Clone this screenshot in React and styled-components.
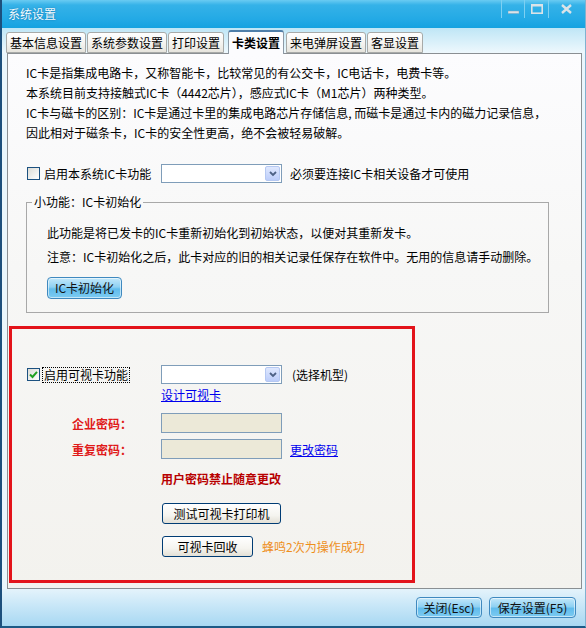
import React from 'react';
import styled, { createGlobalStyle } from 'styled-components';

const GlobalStyle = createGlobalStyle`
  html, body { margin: 0; padding: 0; background: #1b3f5f; }
  body {
    font-family: "Noto Sans CJK SC", "Noto Sans", sans-serif;
    font-size: 12px;
    color: #000;
  }
  * { box-sizing: border-box; }
`;

const Window = styled.div`
  width: 586px;
  height: 628px;
  display: flex;
  flex-direction: column;
  border-left: 2px solid #1c4f7c;
  border-right: 1px solid #7fb2d0;
  border-bottom: 2px solid #1c5a86;
  background: #eaf6fc;
  overflow: hidden;
`;

const TitleBar = styled.div`
  height: 28px;
  flex: none;
  display: flex;
  align-items: flex-start;
  background: linear-gradient(#6acbf2 0, #35b2e8 5px, #22a9e5 20px, #15a2e0 100%);
`;

const Title = styled.div`
  margin: 6px 0 0 6px;
  line-height: 16px;
  color: #f4fbff;
  text-shadow: 0 0 2px rgba(0, 60, 110, 0.5);
`;

const Controls = styled.div`
  margin-left: auto;
  margin-right: 2px;
  display: flex;
  height: 18px;
`;

const CtrlBtn = styled.div`
  width: ${p => p.$w}px;
  height: 18px;
  display: flex;
  align-items: center;
  justify-content: center;
  border-left: 1px solid #7ed0f2;
`;

const TabStrip = styled.div`
  height: 25px;
  flex: none;
  display: flex;
  align-items: flex-end;
  padding-left: 4px;
  background: linear-gradient(#bfe6f6, #eef8fd);
  position: relative;
  z-index: 1;
`;

const Tab = styled.div`
  height: ${p => (p.$active ? 24 : 21)}px;
  margin: ${p => (p.$active ? '0 2px -1px 3px' : '0 1px 0 0')};
  padding: ${p => (p.$active ? '0 3px 1px' : '0 3px')};
  display: flex;
  align-items: center;
  border: 1px solid ${p => (p.$active ? '#8d9aa6' : '#a8aaa8')};
  border-top: ${p => (p.$active ? '2px solid #4e7ea9' : '1px solid #a8aaa8')};
  border-bottom: ${p => (p.$active ? 'none' : '1px solid #a8aaa8')};
  border-radius: 3px 3px 0 0;
  background: ${p => (p.$active ? '#fcfcfe' : 'linear-gradient(#ffffff, #f3f2ee 60%, #e6e4dd)')};
  font-weight: ${p => (p.$active ? 'bold' : 'normal')};
  white-space: nowrap;
`;

const Panel = styled.div`
  height: 536px;
  flex: none;
  margin: 0 3px 0 5px;
  border: 1px solid #8a8f93;
  background: linear-gradient(#fcfcfe, #f7f7f6 40%, #f3f2ee);
  display: flex;
  flex-direction: column;
`;

const Desc = styled.div`
  padding: 9px 0 0 18px;
  line-height: 20px;
`;

const Line = styled.div`
  white-space: nowrap;
`;

const TopRow = styled.div`
  margin: 21px 0 0 19px;
  height: 19px;
  display: flex;
  align-items: center;
`;

const CheckCell = styled.label`
  width: 134px;
  display: flex;
  align-items: center;
  flex: none;
`;

const Box = styled.span`
  width: 13px;
  height: 13px;
  flex: none;
  border: 1px solid #1c5180;
  background: linear-gradient(135deg, #dcdcd6, #ffffff);
  display: flex;
  align-items: center;
  justify-content: center;
`;

const CheckText = styled.span`
  margin-left: 3px;
  padding: 0 1px;
  line-height: 14px;
  outline: ${p => (p.$focus ? '1px dotted #000' : 'none')};
  white-space: nowrap;
`;

const Select = styled.div`
  width: 121px;
  height: 19px;
  flex: none;
  border: 1px solid #7f9db9;
  background: #fff;
  display: flex;
  justify-content: flex-end;
  padding: 1px;
`;

const DropBtn = styled.div`
  width: 15px;
  height: 15px;
  border: 1px solid #b5c8f2;
  border-radius: 2px;
  background: linear-gradient(#dfe8fe, #bccdfa);
  display: flex;
  align-items: center;
  justify-content: center;
`;

const Note = styled.span`
  margin-left: ${p => p.$ml || 8}px;
  white-space: nowrap;
  color: ${p => p.$color || '#000'};
`;

const Group = styled.fieldset`
  margin: 11px 0 0 18px;
  width: 523px;
  padding: 0;
  border: 1px solid #a8a8a8;
`;

const Legend = styled.legend`
  margin-left: 5px;
  padding: 0 2px;
  line-height: 16px;
`;

const GroupBody = styled.div`
  padding: 13px 0 13px 20px;
  line-height: 20px;
`;

const GroupLine = styled.div`
  margin-top: ${p => p.$mt || 0}px;
  white-space: nowrap;
`;

const GlossBtn = styled.button`
  width: ${p => p.$w}px;
  height: ${p => p.$h || 21}px;
  margin-top: ${p => p.$mt || 0}px;
  padding: 0;
  border: 1px solid #3f89bf;
  border-radius: 4px;
  background: linear-gradient(#c3e8fa, #8fd1f3 45%, #61bcec 55%, #7ccbf1);
  box-shadow: inset 0 0 0 1px rgba(255, 255, 255, 0.55);
  font: inherit;
  color: #111;
  line-height: 16px;
  white-space: nowrap;
`;

const RedBox = styled.div`
  margin: 13px 0 0 1px;
  width: 406px;
  height: 257px;
  border: 3px solid #e3131a;
  padding-top: 36px;
`;

const FormRow = styled.div`
  display: grid;
  grid-template-columns: 149px 121px auto;
  align-items: center;
  height: ${p => p.$h}px;
  margin-top: ${p => p.$mt || 0}px;
`;

const Cell = styled.div`
  grid-column: ${p => p.$col};
  padding-left: ${p => p.$pl || 0}px;
  display: flex;
  align-items: center;
  white-space: nowrap;
`;

const Label = styled.span`
  color: #e01a1a;
  font-weight: bold;
`;

const Warn = styled.span`
  color: #b80000;
  font-weight: bold;
`;

const Input = styled.div`
  width: 121px;
  height: 20px;
  border: 1px solid #7f9db9;
  background: #ece9d8;
`;

const Link = styled.a`
  color: #0000ee;
  text-decoration: underline;
  cursor: pointer;
`;

const XpBtn = styled.button`
  width: ${p => p.$w}px;
  height: 21px;
  margin-left: 1px;
  padding: 0;
  border: 1px solid #003c74;
  border-radius: 3px;
  background: linear-gradient(#ffffff, #f5f4ef 60%, #e3e0d6);
  font: inherit;
  line-height: 16px;
  color: #000;
  white-space: nowrap;
`;

const Footer = styled.div`
  flex: 1;
  display: flex;
  justify-content: flex-end;
  align-items: flex-start;
  gap: 7px;
  padding: 8px 9px 0 0;
  background: linear-gradient(#e4f3fb, #cbe8f8 40%, #a8d8f2);
`;

const Check = () => (
  <svg width="9" height="9" viewBox="0 0 9 9">
    <path d="M1 4.5 L3.5 7 L8 1.8" fill="none" stroke="#21a121" strokeWidth="2" />
  </svg>
);

const Chevron = () => (
  <svg width="8" height="6" viewBox="0 0 8 6">
    <path d="M1 1 L4 4 L7 1" fill="none" stroke="#4d6185" strokeWidth="1.8" />
  </svg>
);

const tabs = ['基本信息设置', '系统参数设置', '打印设置', '卡类设置', '来电弹屏设置', '客显设置'];

export default function App() {
  return (
    <>
      <GlobalStyle />
      <Window>
        <TitleBar>
          <Title>系统设置</Title>
          <Controls>
            <CtrlBtn $w={23}>
              <svg width="11" height="10" viewBox="0 0 11 10">
                <rect x="0" y="7" width="11" height="2.5" fill="#dbe3e8" stroke="#7aa3bf" strokeWidth="0.5" />
              </svg>
            </CtrlBtn>
            <CtrlBtn $w={24}>
              <svg width="12" height="10" viewBox="0 0 12 10">
                <rect x="0.8" y="0.8" width="10.4" height="8.4" fill="none" stroke="#dbe3e8" strokeWidth="1.6" />
                <rect x="0" y="0" width="12" height="2.5" fill="#dbe3e8" />
              </svg>
            </CtrlBtn>
            <CtrlBtn $w={35}>
              <svg width="11" height="10" viewBox="0 0 11 10">
                <path d="M1 1 L10 9 M10 1 L1 9" stroke="#dbe3e8" strokeWidth="2.4" />
              </svg>
            </CtrlBtn>
          </Controls>
        </TitleBar>

        <TabStrip>
          {tabs.map(t => (
            <Tab key={t} $active={t === '卡类设置'}>{t}</Tab>
          ))}
        </TabStrip>

        <Panel>
          <Desc>
            <Line>IC卡是指集成电路卡，又称智能卡，比较常见的有公交卡，IC电话卡，电费卡等。</Line>
            <Line>本系统目前支持接触式IC卡（4442芯片），感应式IC卡（M1芯片）两种类型。</Line>
            <Line>IC卡与磁卡的区别：IC卡是通过卡里的集成电路芯片存储信息, 而磁卡是通过卡内的磁力记录信息，</Line>
            <Line>因此相对于磁条卡，IC卡的安全性更高，绝不会被轻易破解。</Line>
          </Desc>

          <TopRow>
            <CheckCell>
              <Box />
              <CheckText>启用本系统IC卡功能</CheckText>
            </CheckCell>
            <Select><DropBtn><Chevron /></DropBtn></Select>
            <Note $ml={8}>必须要连接IC卡相关设备才可使用</Note>
          </TopRow>

          <Group>
            <Legend>小功能：IC卡初始化</Legend>
            <GroupBody>
              <GroupLine>此功能是将已发卡的IC卡重新初始化到初始状态，以便对其重新发卡。</GroupLine>
              <GroupLine $mt={4}>注意：IC卡初始化之后，此卡对应的旧的相关记录任保存在软件中。无用的信息请手动删除。</GroupLine>
              <GlossBtn $w={75} $mt={10} $h={22}>IC卡初始化</GlossBtn>
            </GroupBody>
          </Group>

          <RedBox>
            <FormRow $h={19}>
              <Cell $col={1} $pl={15}>
                <CheckCell>
                  <Box><Check /></Box>
                  <CheckText $focus>启用可视卡功能</CheckText>
                </CheckCell>
              </Cell>
              <Cell $col={2}><Select><DropBtn><Chevron /></DropBtn></Select></Cell>
              <Cell $col={3}><Note $ml={10}>(选择机型)</Note></Cell>
            </FormRow>
            <FormRow $h={18} $mt={1}>
              <Cell $col={2}><Link>设计可视卡</Link></Cell>
            </FormRow>
            <FormRow $h={20} $mt={10}>
              <Cell $col={1} $pl={60}><Label>企业密码：</Label></Cell>
              <Cell $col={2}><Input /></Cell>
            </FormRow>
            <FormRow $h={20} $mt={6}>
              <Cell $col={1} $pl={60}><Label>重复密码：</Label></Cell>
              <Cell $col={2}><Input /></Cell>
              <Cell $col={3} $pl={8}><Link>更改密码</Link></Cell>
            </FormRow>
            <FormRow $h={18} $mt={10}>
              <Cell $col="2 / 4"><Warn>用户密码禁止随意更改</Warn></Cell>
            </FormRow>
            <FormRow $h={21} $mt={16}>
              <Cell $col="2 / 4"><XpBtn $w={119}>测试可视卡打印机</XpBtn></Cell>
            </FormRow>
            <FormRow $h={21} $mt={12}>
              <Cell $col="2 / 4">
                <XpBtn $w={91}>可视卡回收</XpBtn>
                <Note $ml={9} $color="#ee8f1c">蜂鸣2次为操作成功</Note>
              </Cell>
            </FormRow>
          </RedBox>
        </Panel>

        <Footer>
          <GlossBtn $w={66} $h={21}>关闭(Esc)</GlossBtn>
          <GlossBtn $w={87} $h={21}>保存设置(F5)</GlossBtn>
        </Footer>
      </Window>
    </>
  );
}
